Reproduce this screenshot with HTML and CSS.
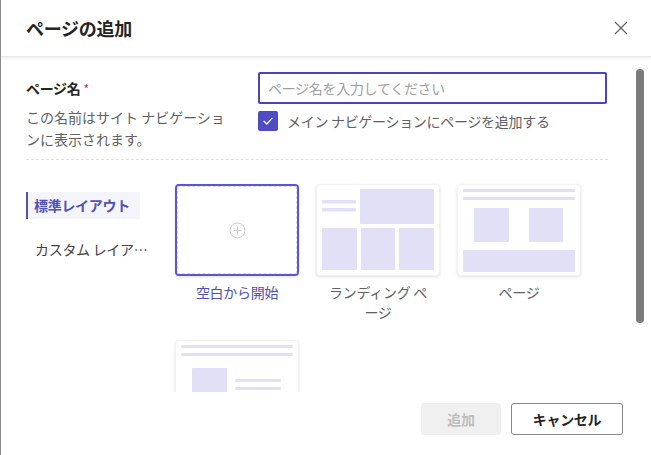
FILE: index.html
```
<!DOCTYPE html>
<html lang="ja">
<head>
<meta charset="utf-8">
<link rel="stylesheet" href="styles.css">
</head>
<body>
<div class="dialog">
  <div class="header">
    <h1 class="title">ページの追加</h1>
    <button class="close" aria-label="閉じる">
      <svg width="14" height="14" viewBox="0 0 14 14"><path d="M1 1L13 13M13 1L1 13" stroke="#616161" stroke-width="1.1" fill="none"/></svg>
    </button>
  </div>
  <div class="body">
    <div class="form">
      <div class="form-left">
        <div class="field-label">ページ名 <span class="req">*</span></div>
        <div class="field-desc">この名前はサイト ナビゲーションに表示されます。</div>
      </div>
      <div class="form-right">
        <input class="name-input" type="text" placeholder="ページ名を入力してください">
        <label class="check-row">
          <span class="checkbox"><svg width="12" height="12" viewBox="0 0 12 12"><path d="M2 6.3L4.8 9L10 3.4" stroke="#fff" stroke-width="1.3" fill="none" stroke-linecap="round" stroke-linejoin="round"/></svg></span>
          <span class="check-text">メイン ナビゲーションにページを追加する</span>
        </label>
      </div>
    </div>
    <div class="divider"></div>
    <div class="layouts">
      <nav class="nav">
        <div class="nav-item active">標準レイアウト</div>
        <div class="nav-item">カスタム レイアウト</div>
      </nav>
      <div class="grid">
        <div class="tile">
          <div class="card card-blank">
            <div class="blank-inner">
              <svg width="17" height="17" viewBox="0 0 17 17"><circle cx="8.5" cy="8.5" r="7.5" stroke="#c9c6ea" stroke-width="1" fill="none"/><path d="M8.5 4.5V12.5M4.5 8.5H12.5" stroke="#c9c6ea" stroke-width="1"/></svg>
            </div>
          </div>
          <div class="tile-label selected">空白から開始</div>
        </div>
        <div class="tile">
          <div class="card">
            <svg class="thumb" width="124" height="92" viewBox="0 0 124 92">
              <g fill="#e2e0f6">
                <rect x="44" y="5" width="74" height="35" rx="1"/>
                <rect x="6" y="16" width="34" height="3.5" rx="1"/>
                <rect x="6" y="24" width="34" height="3.5" rx="1"/>
                <rect x="6" y="44" width="35" height="42" rx="1"/>
                <rect x="45" y="44" width="34" height="42" rx="1"/>
                <rect x="83" y="44" width="35" height="42" rx="1"/>
              </g>
            </svg>
          </div>
          <div class="tile-label">ランディング ページ</div>
        </div>
        <div class="tile">
          <div class="card">
            <svg class="thumb" width="124" height="92" viewBox="0 0 124 92">
              <g fill="#e2e0f6">
                <rect x="6" y="5" width="112" height="3" rx="1"/>
                <rect x="6" y="13" width="112" height="3" rx="1"/>
                <rect x="17" y="24" width="35" height="34" rx="1"/>
                <rect x="72" y="24" width="34" height="34" rx="1"/>
                <rect x="6" y="66" width="112" height="22" rx="1"/>
              </g>
            </svg>
          </div>
          <div class="tile-label">ページ</div>
        </div>
        <div class="tile">
          <div class="card">
            <svg class="thumb" width="124" height="92" viewBox="0 0 124 92">
              <g fill="#e2e0f6">
                <rect x="6" y="5" width="112" height="3" rx="1"/>
                <rect x="6" y="13" width="112" height="3" rx="1"/>
                <rect x="17" y="28" width="35" height="34" rx="1"/>
                <rect x="60" y="39" width="46" height="3" rx="1"/>
                <rect x="60" y="47" width="46" height="3" rx="1"/>
              </g>
            </svg>
          </div>
        </div>
      </div>
    </div>
  </div>
  <div class="footer">
    <button class="btn btn-disabled" disabled>追加</button>
    <button class="btn btn-secondary">キャンセル</button>
  </div>
  <div class="scroll-thumb"></div>
</div>
</body>
</html>
```
FILE: styles.css
```
* { box-sizing: border-box; }
html, body { margin: 0; padding: 0; background: #fff; }
body {
  font-family: "Noto Sans CJK JP", "Noto Sans", sans-serif;
  font-size: 14px;
  color: #242424;
}
.dialog {
  position: relative;
  width: 651px;
  height: 455px;
  border-left: 1px solid #8a8a8a;
  display: flex;
  flex-direction: column;
  overflow: hidden;
}
.header {
  flex: 0 0 57px;
  display: flex;
  align-items: center;
  justify-content: space-between;
  padding: 0 23px 0 25px;
  border-bottom: 1px solid #e8e8e8;
  box-shadow: 0 1px 3px rgba(0,0,0,0.10);
  position: relative;
  z-index: 1;
}
.title {
  margin: 0;
  font-size: 18px;
  font-weight: 700;
  line-height: 24px;
  color: #242424;
  letter-spacing: -0.3px;
}
.close {
  border: 0;
  background: none;
  padding: 0;
  width: 14px;
  height: 14px;
  display: flex;
}
.body {
  flex: 0 0 335px;
  overflow: hidden;
  padding: 15px 43px 0 25px;
}
.form {
  display: grid;
  grid-template-columns: 232px 349px;
}
.field-label {
  font-weight: 700;
  line-height: 32px;
  letter-spacing: -0.3px;
}
.req { color: #c4314b; font-weight: 400; font-size: 12px; }
.field-desc {
  margin-top: 1px;
  width: 201px;
  line-height: 22px;
  color: #616161;
  line-break: loose;
}
.name-input {
  display: block;
  width: 349px;
  height: 32px;
  margin: 0;
  border: 2px solid #4a44b8;
  border-radius: 2px;
  padding: 0 8px;
  font-family: inherit;
  font-size: 14px;
  color: #242424;
  outline: none;
  letter-spacing: -0.3px;
}
.name-input::placeholder { color: #a0a0a0; }
.check-row {
  display: flex;
  align-items: center;
  margin-top: 7px;
  height: 20px;
}
.checkbox {
  width: 20px;
  height: 20px;
  border-radius: 2px;
  background: #4f4bc0;
  display: flex;
  align-items: center;
  justify-content: center;
}
.check-text {
  margin-left: 9px;
  color: #616161;
  line-height: 20px;
  letter-spacing: -0.3px;
}
.divider {
  margin-top: 9px;
  border-top: 1px dashed #e1dfdd;
}
.layouts {
  display: flex;
  margin-top: 24px;
}
.nav {
  flex: 0 0 126px;
  margin-right: 23px;
  margin-top: 8px;
  display: flex;
  flex-direction: column;
  align-items: flex-start;
}
.nav-item {
  height: 27px;
  line-height: 27px;
  color: #424242;
  white-space: nowrap;
  overflow: hidden;
  text-overflow: ellipsis;
  letter-spacing: -0.3px;
}
.nav-item.active {
  background: #f4f4fb;
  border-left: 2px solid #4f52b2;
  padding: 0 10px 0 6px;
  color: #4f52b2;
  font-weight: 700;
}
.nav-item + .nav-item {
  margin-top: 17px;
  padding-left: 9px;
  width: 126px;
}
.grid {
  display: grid;
  grid-template-columns: repeat(3, 124px);
  column-gap: 17px;
  row-gap: 18px;
  align-items: start;
}
.tile {
  display: flex;
  flex-direction: column;
  align-items: center;
}
.card {
  width: 124px;
  height: 92px;
  border-radius: 4px;
  background: #fff;
  border: 1px solid #f2f2f2;
  box-shadow: 0 1px 3px rgba(0,0,0,0.13);
  overflow: hidden;
  position: relative;
}
.thumb { display: block; margin: -1px; }
.card-blank {
  border: 2px solid #5b57d0;
}
.blank-inner {
  width: 100%;
  height: 100%;
  border: 1px dashed #dcdaf0;
  display: flex;
  align-items: center;
  justify-content: center;
}
.tile-label {
  margin-top: 6px;
  width: 124px;
  padding: 0 8px;
  text-align: center;
  line-height: 20px;
  color: #616161;
  line-break: loose;
  letter-spacing: -0.3px;
}
.tile-label.selected { color: #4f52b2; }
.footer {
  flex: 1;
  display: flex;
  justify-content: flex-end;
  align-items: flex-start;
  gap: 10px;
  padding: 11px 28px 0 0;
}
.btn {
  height: 32px;
  border-radius: 3px;
  font-family: inherit;
  font-size: 14px;
  font-weight: 700;
  padding: 0;
  letter-spacing: -0.3px;
}
.btn-disabled {
  width: 80px;
  background: #f0f0f0;
  border: 0;
  color: #bdbdbd;
}
.btn-secondary {
  width: 112px;
  background: #fff;
  border: 1px solid #8a8886;
  color: #242424;
}
.scroll-thumb {
  position: absolute;
  left: 635px;
  top: 69px;
  width: 8px;
  height: 254px;
  border-radius: 4px;
  background: #7a7a7a;
}
```
